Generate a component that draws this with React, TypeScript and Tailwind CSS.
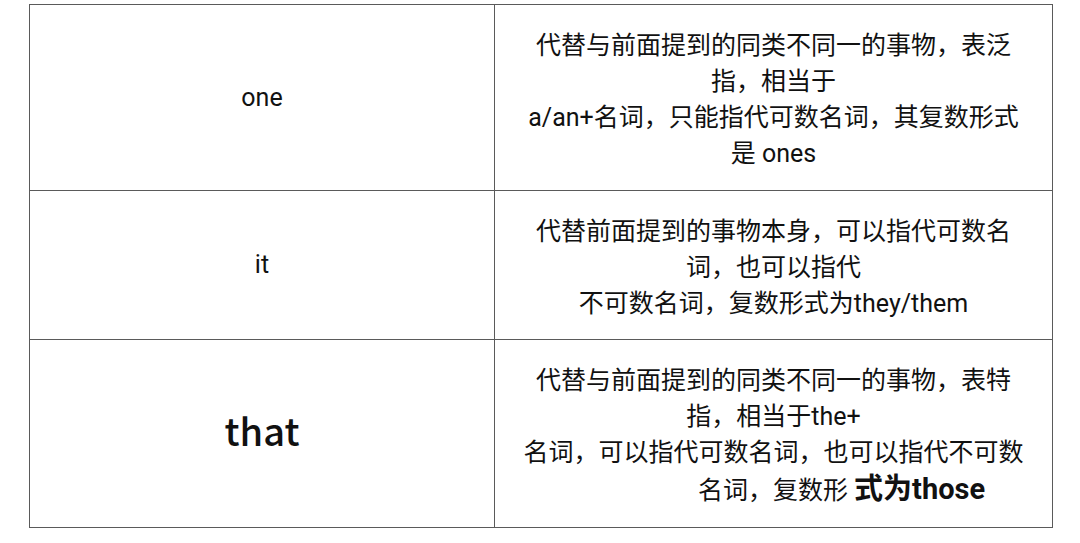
const font = '[font-family:Roboto,"Noto_Sans_CJK_SC",sans-serif]'

type Row = {
  word: string
  big?: boolean
  h: string
  lines: React.ReactNode[]
}

const rows: Row[] = [
  {
    word: 'one',
    h: 'h-[186px]',
    lines: [
      '代替与前面提到的同类不同一的事物，表泛',
      '指，相当于',
      'a/an+名词，只能指代可数名词，其复数形式',
      '是 ones',
    ],
  },
  {
    word: 'it',
    h: 'h-[149px]',
    lines: ['代替前面提到的事物本身，可以指代可数名', '词，也可以指代', '不可数名词，复数形式为they/them'],
  },
  {
    word: 'that',
    big: true,
    h: 'h-[188px]',
    lines: [
      '代替与前面提到的同类不同一的事物，表特',
      '指，相当于the+',
      '名词，可以指代可数名词，也可以指代不可数',
      <span className="inline-block pl-[136px]">
        名词，复数形 <span className="text-[29px] font-bold">式为those</span>
      </span>,
    ],
  },
]

export default function App() {
  return (
    <div className="w-[1080px] h-[543px] bg-white pt-[4px] pl-[29px]">
      <table className={`table-fixed border-collapse text-[#111] ${font}`}>
        <tbody>
          {rows.map((r) => (
            <tr key={r.word} className={r.h}>
              <td className="w-[465px] border border-[#5a5a5a] text-center align-middle">
                {r.big ? (
                  <span className="block text-[38px] leading-[40px] font-medium -mt-[8px] [font-family:'Noto_Sans_CJK_SC',sans-serif]">
                    {r.word}
                  </span>
                ) : (
                  <span className="text-[25px]">{r.word}</span>
                )}
              </td>
              <td className="w-[558px] border border-[#5a5a5a] text-center align-middle text-[25px] leading-[36px] pt-[5px]">
                {r.lines.map((l, i) => (
                  <div key={i}>{l}</div>
                ))}
              </td>
            </tr>
          ))}
        </tbody>
      </table>
    </div>
  )
}
